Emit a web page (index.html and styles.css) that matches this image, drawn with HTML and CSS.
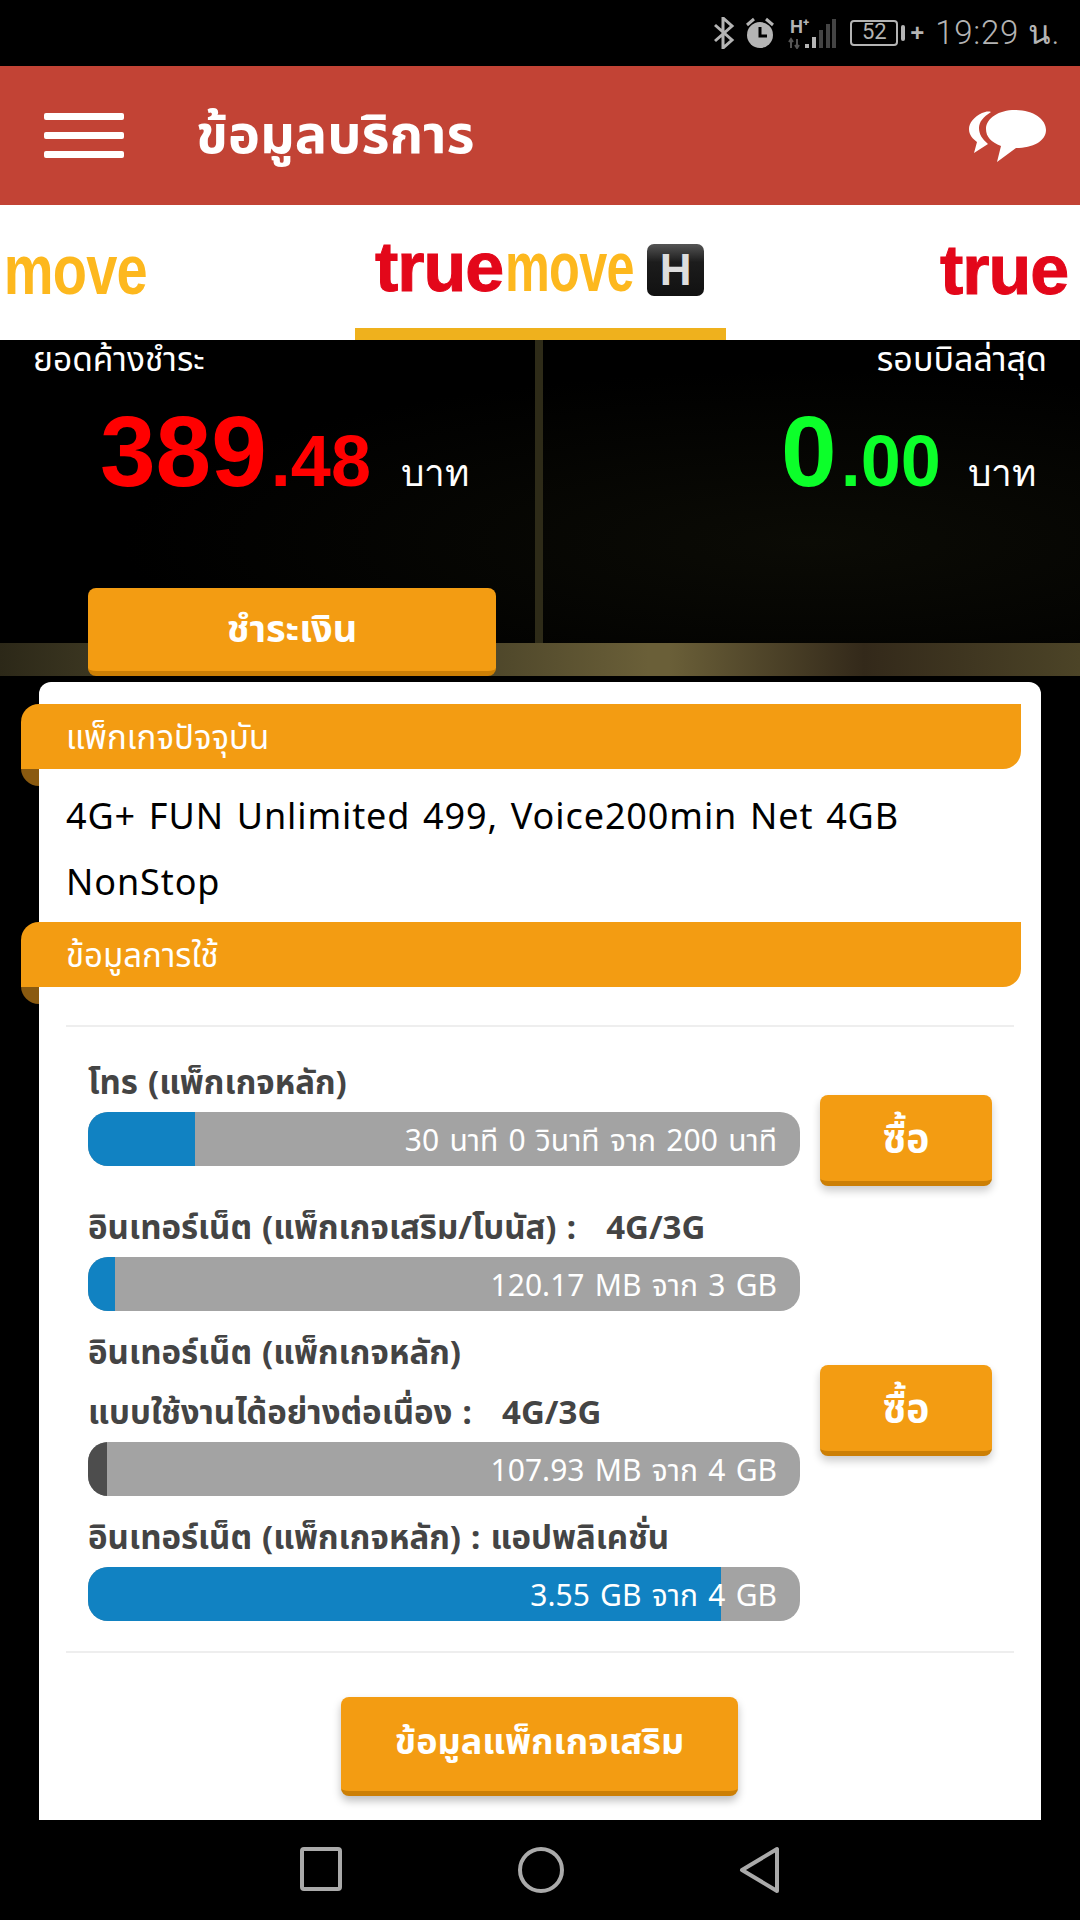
FILE: index.html
```html
<!DOCTYPE html>
<html>
<head>
  <title>ข้อมูลบริการ</title>
  <meta charset="utf-8" />
  <link rel="stylesheet" href="styles.css">
</head>
<body>
  <div class="statusbar">
    <svg class="ic-bt" width="22" height="32" viewBox="0 0 22 32"><path d="M2 8 L19 23 L10 31 V1 L19 9 L2 24" fill="none" stroke="#b4b4b4" stroke-width="3"/></svg>
    <svg class="ic-alarm" width="30" height="32" viewBox="0 0 30 32"><circle cx="15" cy="18" r="13" fill="#b4b4b4"/><path d="M15 10 V19 H22" fill="none" stroke="#000" stroke-width="3"/><path d="M2 8 L9 2 M28 8 L21 2" stroke="#b4b4b4" stroke-width="3"/></svg>
    <svg class="ic-signal" width="48" height="30" viewBox="0 0 48 30"><rect x="17" y="25" width="4" height="4" fill="#b4b4b4"/><rect x="24" y="18" width="4" height="11" fill="#b4b4b4"/><rect x="31" y="11" width="4" height="18" fill="#444"/><rect x="38" y="5" width="4" height="24" fill="#444"/><rect x="44" y="0" width="4" height="29" fill="#444"/><path d="M3 29 V20 M1 23 L3 20 L5 23 M9 20 V29 M7 26 L9 29 L11 26" fill="none" stroke="#555" stroke-width="2"/></svg>
    <span class="hplus">H⁺</span>
    <span class="battery">52</span>
    <span class="batt-tip"></span>
    <span class="batt-plus">+</span>
    <span class="clock">19:29 น.</span>
  </div>

  <div class="topbar">
    <div class="burger"><i></i><i></i><i></i></div>
    <h1>ข้อมูลบริการ</h1>
    <svg class="chat" width="78" height="54" viewBox="0 0 78 54"><path d="M46 1 C64 1 77 10 77 21 C77 32 64 39 47 39 L28 53 L32 37 C22 33 17 28 17 20 C17 9 30 1 46 1 Z" fill="#fff"/><path d="M13 4 C5 8 0 14 0 20 C0 26 4 30 8 33 L5 44 L19 35 C13 30 10 25 10 19 C10 13 14 8 22 3 C19 2 16 3 13 4 Z" fill="#fff"/></svg>
  </div>

  <div class="tabs">
    <div class="tab tab-left"><span class="logo-move">move</span></div>
    <div class="tab tab-active">
      <span class="logo-true">true</span><span class="logo-move">move</span><span class="logo-h">H</span>
    </div>
    <div class="tab tab-right"><span class="logo-true">true</span></div>
  </div>

  <div class="balance">
    <div class="col">
      <div class="col-title">ยอดค้างชำระ</div>
      <div class="amount red"><b>389</b><b class="dec">.48</b><span class="baht">บาท</span></div>
      <a class="btn btn-pay">ชำระเงิน</a>
    </div>
    <div class="col col-r">
      <div class="col-title">รอบบิลล่าสุด</div>
      <div class="amount green"><b>0</b><b class="dec">.00</b><span class="baht">บาท</span></div>
    </div>
  </div>

  <div class="card">
    <div class="ribbon">แพ็กเกจปัจจุบัน</div>
    <p class="pkg">4G+ FUN Unlimited 499, Voice200min Net 4GB NonStop</p>
    <div class="ribbon">ข้อมูลการใช้</div>
    <hr class="rule rule-top">

    <div class="row">
      <div class="usage">
        <div class="lbl">โทร (แพ็กเกจหลัก)</div>
        <div class="bar"><div class="fill" style="width: 15%"></div><span>30 นาที 0 วินาที จาก 200 นาที</span></div>
      </div>
      <a class="btn btn-buy">ซื้อ</a>
    </div>

    <div class="row">
      <div class="usage">
        <div class="lbl">อินเทอร์เน็ต (แพ็กเกจเสริม/โบนัส) :&nbsp;&nbsp; 4G/3G</div>
        <div class="bar"><div class="fill" style="width: 3.8%"></div><span>120.17 MB จาก 3 GB</span></div>
      </div>
    </div>

    <div class="row">
      <div class="usage">
        <div class="lbl">อินเทอร์เน็ต (แพ็กเกจหลัก)</div>
        <div class="lbl">แบบใช้งานได้อย่างต่อเนื่อง :&nbsp;&nbsp; 4G/3G</div>
        <div class="bar"><div class="fill fill-dark" style="width: 2.7%"></div><span>107.93 MB จาก 4 GB</span></div>
      </div>
      <a class="btn btn-buy">ซื้อ</a>
    </div>

    <div class="row">
      <div class="usage">
        <div class="lbl">อินเทอร์เน็ต (แพ็กเกจหลัก) : แอปพลิเคชั่น</div>
        <div class="bar"><div class="fill" style="width: 88.9%"></div><span>3.55 GB จาก 4 GB</span></div>
      </div>
    </div>

    <hr class="rule rule-bottom">
    <a class="btn btn-more">ข้อมูลแพ็กเกจเสริม</a>
  </div>

  <div class="navbar">
    <svg width="44" height="46" viewBox="0 0 44 46"><rect x="3" y="3" width="38" height="40" rx="2" fill="none" stroke="#aaa" stroke-width="4"/></svg>
    <svg width="48" height="48" viewBox="0 0 48 48"><circle cx="24" cy="24" r="21" fill="none" stroke="#aaa" stroke-width="4"/></svg>
    <svg width="42" height="48" viewBox="0 0 42 48"><path d="M38 3 V45 L3 24 Z" fill="none" stroke="#aaa" stroke-width="4" stroke-linejoin="round"/></svg>
  </div>
</body>
</html>
```
FILE: styles.css
```css
* {
  box-sizing: border-box;
}
html, body {
  margin: 0;
  height: 1920px;
  overflow: hidden;
}
body {
  width: 1080px;
  background-color: #000;
  font-family: "Noto Sans", "Noto Sans Thai", "Noto Sans Thai UI", "DejaVu Sans", sans-serif;
  color: #000;
}
a {
  display: block;
}

/* status bar */
.statusbar {
  height: 66px;
  display: flex;
  align-items: center;
  justify-content: flex-end;
  padding-right: 20px;
  color: #b4b4b4;
  position: relative;
}
.ic-bt { margin-right: 10px; }
.ic-alarm { margin-right: 13px; }
.ic-signal { margin: 2px 14px 0 0; }
.hplus {
  position: absolute;
  left: 790px;
  top: 14px;
  font: bold 18px "Liberation Sans", sans-serif;
}
.battery {
  width: 48px;
  height: 26px;
  border: 2px solid #b4b4b4;
  border-radius: 4px;
  font: 22px/20px Roboto, sans-serif;
  text-align: center;
}
.batt-tip {
  width: 4px;
  height: 16px;
  margin-left: 3px;
  background-color: #b4b4b4;
  border-radius: 2px;
}
.batt-plus {
  font: bold 24px/24px "Liberation Sans", sans-serif;
  margin: 0 11px 0 5px;
}
.clock {
  font: 300 33px/40px Roboto, "Noto Sans", sans-serif;
  letter-spacing: 0.7px;
}

/* red title bar */
.topbar {
  height: 139px;
  background-color: #c24335;
  display: flex;
  align-items: center;
  color: #fff;
  padding: 0 33px 0 44px;
}
.burger {
  width: 80px;
  display: flex;
  flex-direction: column;
  gap: 12px;
}
.burger i {
  display: block;
  height: 7px;
  background-color: #fff;
  border-radius: 2px;
}
.topbar h1 {
  font-size: 54px;
  font-weight: bold;
  margin: 0 0 0 72px;
  flex: 1;
}

/* operator tabs */
.tabs {
  height: 135px;
  background-color: #fff;
  display: grid;
  grid-template-columns: 355px 371px 354px;
  overflow: hidden;
  font-family: "Liberation Sans", sans-serif;
}
.tab {
  display: flex;
  align-items: center;
  padding-bottom: 6px;
  letter-spacing: -1px;
}
.tab-left {
  justify-content: flex-end;
  padding-right: 208px;
}
.tab-left .logo-move {
  font-size: 70px;
  transform: scaleX(0.8);
  transform-origin: right;
  margin: 0;
  margin-left: -50px;
}
.tab-right {
  padding-left: 214px;
  white-space: nowrap;
}
.tab-active {
  padding: 0 0 0 20px;
  border-bottom: 12px solid #efb11d;
}
.logo-true {
  color: #e3071a;
  font-weight: bold;
  font-size: 70px;
  -webkit-text-stroke: 1px #e3071a;
}
.logo-move {
  color: #fdb81e;
  font-weight: bold;
  font-size: 70px;
  display: inline-block;
  transform: scaleX(0.72);
  transform-origin: left;
  margin: 0 -51px 0 2px;
}
.logo-h {
  width: 57px;
  height: 52px;
  margin: 6px 0 0 14px;
  background: linear-gradient(180deg, #555, #1c1c1c 35%, #111);
  border-radius: 7px;
  color: #ddd;
  font-size: 44px;
  font-weight: bold;
  line-height: 52px;
  text-align: center;
  letter-spacing: 0;
}

/* balance panel */
.balance {
  height: 336px;
  display: grid;
  grid-template-columns: 535px 545px;
  color: #fff;
  background-color: #000;
  background-image:
    linear-gradient(90deg, #2c2818 0, #3a3520 8%, #3a3520 35%, #6a5f38 60%, #6a5f38 62%, #33291a 80%, #4c4427 100%),
    linear-gradient(90deg, transparent 535px, #2e2b18 535px, #2e2b18 543px, transparent 543px),
    radial-gradient(ellipse at 75% 60%, #0b0b05 0, #000 60%);
  background-size: 100% 33px, 100% 100%, 100% 100%;
  background-position: 0 100%, 0 0, 0 0;
  background-repeat: no-repeat;
}
.col {
  padding-left: 33px;
}
.col-r {
  padding: 0 33px 0 0;
  text-align: right;
}
.col-title {
  font-size: 33.5px;
  line-height: 36px;
}
.col-r .col-title {
  font-size: 34px;
}
.amount {
  display: flex;
  align-items: baseline;
  height: 144px;
  padding: 18px 0 0 67px;
  font-family: "Liberation Sans", sans-serif;
}
.col-r .amount {
  padding-left: 246px;
}
.amount b {
  font-size: 100px;
}
.amount b.dec {
  font-size: 72px;
  margin-left: 4px;
}
.red { color: #ff0000; }
.green { color: #0cff2a; }
.baht {
  color: #fff;
  font-family: "Noto Sans", sans-serif;
  font-size: 37px;
  margin-left: 30px;
}
.col-r .baht {
  margin-left: 27px;
}

/* buttons */
.btn {
  background-color: #f39c12;
  border-bottom: 5px solid #cc7f05;
  border-radius: 8px;
  color: #fff;
  font-weight: bold;
  text-align: center;
}
.btn-pay {
  width: 408px;
  height: 88px;
  margin: 68px 0 0 55px;
  font-size: 38px;
  line-height: 78px;
}
.btn-buy {
  width: 172px;
  height: 91px;
  margin: 43px 0 0 20px;
  font-size: 39px;
  line-height: 84px;
  box-shadow: 0 5px 8px rgba(0, 0, 0, 0.2);
}
.btn-more {
  width: 397px;
  height: 99px;
  margin: 44px 0 0 302px;
  font-size: 36px;
  line-height: 88px;
  box-shadow: 0 5px 8px rgba(0, 0, 0, 0.25);
}

/* white card */
.card {
  height: 1138px;
  margin: 6px 39px 0;
  padding-top: 22px;
  background-color: #fff;
  border-radius: 12px 12px 0 0;
}
.ribbon {
  position: relative;
  width: 1000px;
  height: 65px;
  margin-left: -18px;
  padding-left: 45px;
  background-color: #f39c12;
  border-radius: 18px 0 18px 0;
  color: #fff;
  font-size: 33px;
  line-height: 65px;
}
.ribbon::before {
  content: "";
  position: absolute;
  z-index: -1;
  left: 0;
  top: 40px;
  width: 18px;
  height: 42px;
  background-color: #8a5a10;
  border-radius: 0 0 0 18px;
}
.pkg {
  margin: 14px 0 7px;
  padding: 0 27px;
  font-size: 36px;
  line-height: 66px;
  letter-spacing: 0.9px;
  word-spacing: 2.5px;
}
.rule {
  height: 2px;
  margin: 0 27px;
  border: 0;
  background-color: #eee;
}
.rule-top {
  margin-top: 38px;
  margin-bottom: 25px;
}
.rule-bottom {
  margin-top: 30px;
}

/* usage rows */
.row {
  display: flex;
  align-items: flex-start;
  padding-left: 49px;
  margin-bottom: 11px;
}
.usage {
  width: 712px;
}
.lbl {
  height: 60px;
  color: #444;
  font-size: 33px;
  font-weight: bold;
  line-height: 60px;
  white-space: nowrap;
  word-spacing: 1.5px;
}
.bar {
  position: relative;
  height: 54px;
  background-color: #a3a3a3;
  border-radius: 20px;
  overflow: hidden;
  color: #fff;
  font-size: 30px;
  line-height: 56px;
  text-align: right;
  padding-right: 23px;
  word-spacing: 2.5px;
}
.bar span {
  position: relative;
}
.fill {
  position: absolute;
  left: 0;
  top: 0;
  bottom: 0;
  background-color: #1182c2;
}
.fill-dark {
  background-color: #4d4d4d;
}

/* navigation bar */
.navbar {
  height: 100px;
  display: grid;
  grid-template-columns: 44px 48px 42px;
  column-gap: 174px;
  justify-content: center;
  align-content: center;
}
```
